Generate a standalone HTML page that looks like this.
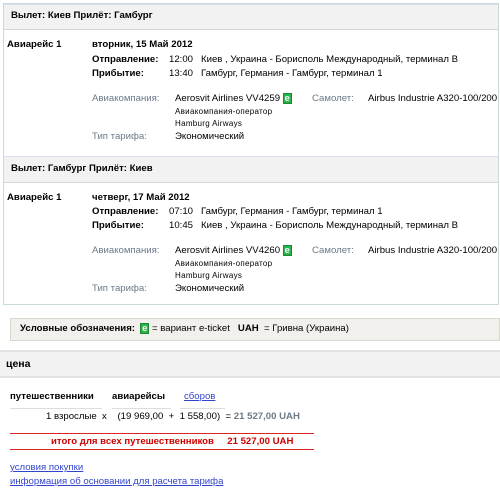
<!DOCTYPE html><html><head><meta charset="utf-8"><style>
body{margin:0;width:500px;height:496px;background:#fff;font-family:"Liberation Sans",Arial,sans-serif;font-size:9.6px;color:#000;position:relative;overflow:hidden}
.a{position:absolute;white-space:nowrap;line-height:11px}
.b{font-weight:bold}.g{color:#6a7a88}
.e{display:inline-block;background:#2ab34a;color:#fff;font-weight:bold;width:9px;height:11px;text-align:center;line-height:10px;border:1px solid #1a8a30;box-sizing:border-box}
.hd{position:absolute;left:4px;width:494px;background:#f2f2f2;border-top:1px solid #dde;border-bottom:1px solid #d0d8d8}
a{color:#3344cc;text-decoration:underline}
</style></head><body>
<div style="position:absolute;left:3px;top:3px;width:494px;height:300px;border:1px solid #c6dcdc"></div>
<div class="hd" style="top:4px;height:24px"></div>
<div class="hd" style="top:156px;height:25px"></div>
<div class="a b" style="left:11px;top:10px">Вылет: Киев Прилёт: Гамбург</div>
<div class="a b" style="left:7px;top:39px">Авиарейс 1</div>
<div class="a b" style="left:92px;top:39px">вторник, 15 Май 2012</div>
<div class="a b" style="left:92px;top:54px">Отправление:</div><div class="a" style="left:169px;top:54px">12:00&nbsp;&nbsp; Киев , Украина - Борисполь Международный, терминал B</div>
<div class="a b" style="left:92px;top:68px">Прибытие:</div><div class="a" style="left:169px;top:68px">13:40&nbsp;&nbsp; Гамбург, Германия - Гамбург, терминал 1</div>
<div class="a g" style="left:92px;top:93px">Авиакомпания:</div><div class="a" style="left:175px;top:93px">Aerosvit Airlines VV4259 <span class="e">e</span></div>
<div class="a g" style="left:312px;top:93px">Самолет:</div><div class="a" style="left:368px;top:93px">Airbus Industrie A320-100/200</div>
<div class="a" style="left:175px;top:106px;font-size:8px;letter-spacing:0.3px">Авиакомпания-оператор</div>
<div class="a" style="left:175px;top:118px;font-size:8px;letter-spacing:0.3px">Hamburg Airways</div>
<div class="a g" style="left:92px;top:131px">Тип тарифа:</div><div class="a" style="left:175px;top:131px">Экономический</div>

<div class="a b" style="left:11px;top:163px">Вылет: Гамбург Прилёт: Киев</div>
<div class="a b" style="left:7px;top:192px">Авиарейс 1</div>
<div class="a b" style="left:92px;top:192px">четверг, 17 Май 2012</div>
<div class="a b" style="left:92px;top:206px">Отправление:</div><div class="a" style="left:169px;top:206px">07:10&nbsp;&nbsp; Гамбург, Германия - Гамбург, терминал 1</div>
<div class="a b" style="left:92px;top:220px">Прибытие:</div><div class="a" style="left:169px;top:220px">10:45&nbsp;&nbsp; Киев , Украина - Борисполь Международный, терминал B</div>
<div class="a g" style="left:92px;top:245px">Авиакомпания:</div><div class="a" style="left:175px;top:245px">Aerosvit Airlines VV4260 <span class="e">e</span></div>
<div class="a g" style="left:312px;top:245px">Самолет:</div><div class="a" style="left:368px;top:245px">Airbus Industrie A320-100/200</div>
<div class="a" style="left:175px;top:258px;font-size:8px;letter-spacing:0.3px">Авиакомпания-оператор</div>
<div class="a" style="left:175px;top:270px;font-size:8px;letter-spacing:0.3px">Hamburg Airways</div>
<div class="a g" style="left:92px;top:283px">Тип тарифа:</div><div class="a" style="left:175px;top:283px">Экономический</div>

<div style="position:absolute;left:10px;top:318px;width:490px;height:23px;background:#f2f0ec;border:1px solid #d8d8d0;box-sizing:border-box"></div>
<div class="a" style="left:20px;top:323px"><b>Условные обозначения:</b>&nbsp; <span class="e">e</span> = вариант e-ticket&nbsp;&nbsp; <b>UAH</b>&nbsp; = Гривна (Украина)</div>

<div style="position:absolute;left:0;top:350px;width:500px;height:28px;background:#f2f2f2;border-top:2px solid #e2e2e2;border-bottom:2px solid #e2e2e2;box-sizing:border-box"></div>
<div class="a b" style="left:6px;top:359px;font-size:10.5px">цена</div>

<div class="a b" style="left:10px;top:391px">путешественники</div>
<div class="a b" style="left:112px;top:391px">авиарейсы</div>
<div class="a" style="left:184px;top:391px"><a>сборов</a></div>
<div style="position:absolute;left:10px;top:408px;width:92px;height:1px;background:#ddd"></div>
<div style="position:absolute;left:112px;top:408px;width:59px;height:1px;background:#ddd"></div>
<div style="position:absolute;left:180px;top:408px;width:45px;height:1px;background:#ddd"></div>
<div class="a" style="left:46px;top:411px">1 взрослые&nbsp; x&nbsp;&nbsp;&nbsp; (19 969,00&nbsp; +&nbsp; 1 558,00)&nbsp; = <b style="color:#6a7a88">21 527,00 UAH</b></div>
<div style="position:absolute;left:10px;top:433px;width:304px;height:1px;background:#d22"></div>
<div style="position:absolute;left:10px;top:449px;width:304px;height:1px;background:#d22"></div>
<div class="a b" style="left:51px;top:436px;color:#c00">итого для всех путешественников&nbsp;&nbsp;&nbsp;&nbsp; 21 527,00 UAH</div>
<div class="a" style="left:10px;top:462px"><a>условия покупки</a></div>
<div class="a" style="left:10px;top:476px"><a>информация об основании для расчета тарифа</a></div>
</body></html>
